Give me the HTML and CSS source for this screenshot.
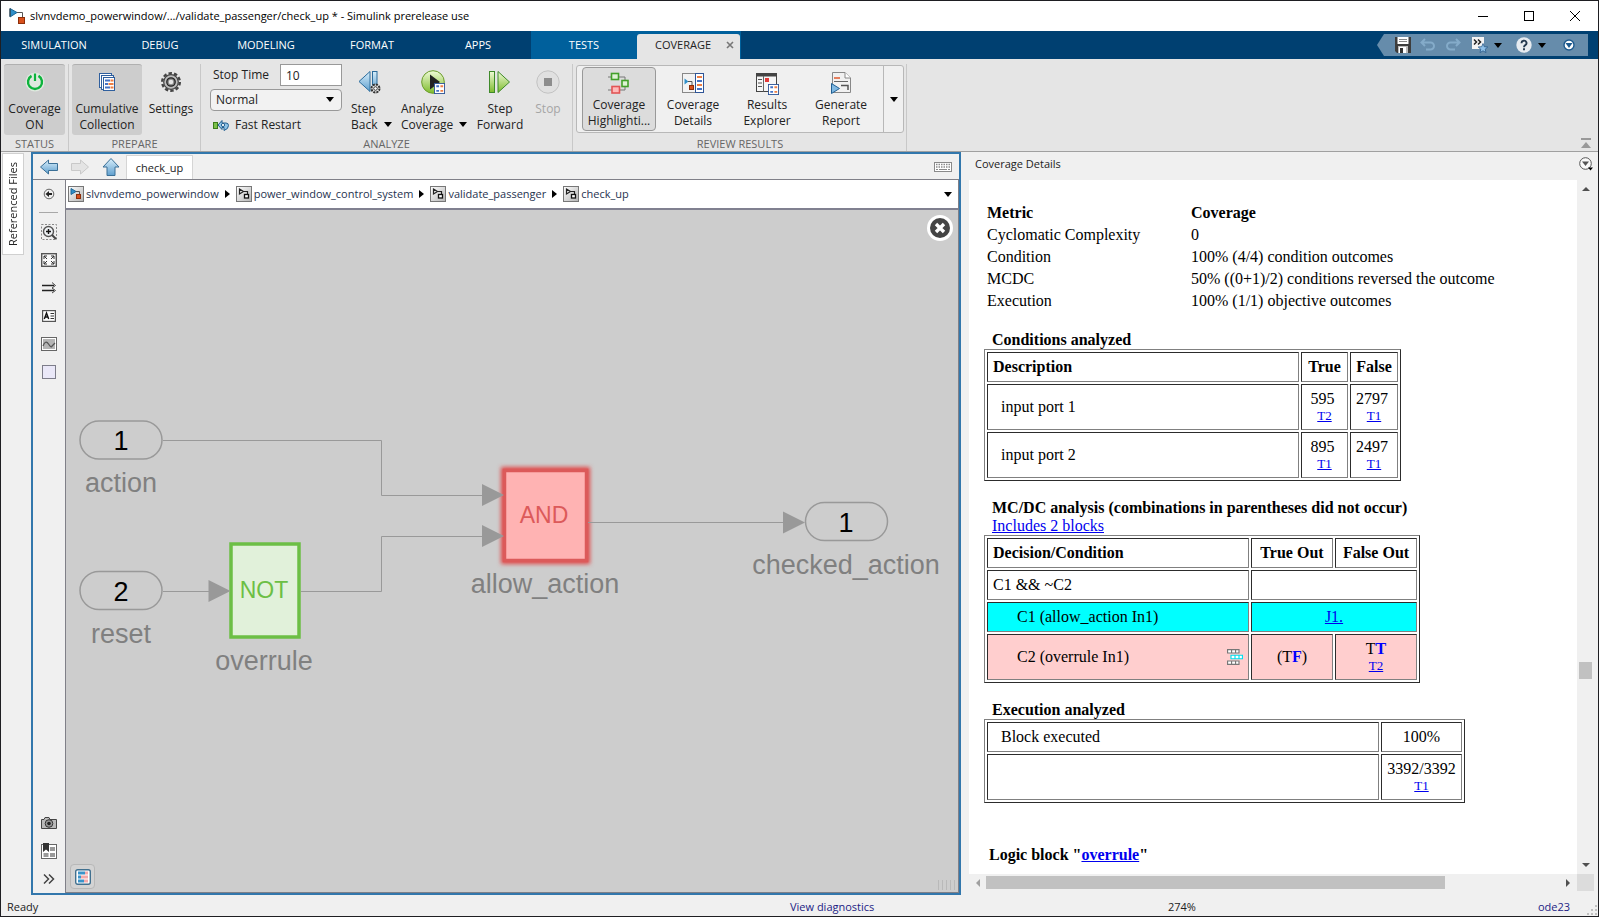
FILE: index.html
```html
<!DOCTYPE html>
<html lang="en">
<head>
<meta charset="utf-8">
<title>slvnvdemo_powerwindow - Simulink</title>
<link rel="stylesheet" href="styles.css">
</head>
<body>
<svg class="defs" width="0" height="0" aria-hidden="true">
  <defs>
    <linearGradient id="g-blue" x1="0" y1="0" x2="0" y2="1"><stop offset="0" stop-color="#d9effb"/><stop offset="1" stop-color="#5f9fce"/></linearGradient>
    <linearGradient id="g-green" x1="0" y1="0" x2="0" y2="1"><stop offset="0" stop-color="#f0fbd8"/><stop offset="1" stop-color="#7dbb2c"/></linearGradient>
    <linearGradient id="g-gray" x1="0" y1="0" x2="1" y2="1"><stop offset="0" stop-color="#ffffff"/><stop offset="1" stop-color="#b4b4b4"/></linearGradient>
    <symbol id="i-model" viewBox="0 0 16 16"><path d="M8 4.500H13.500V10" fill="none" stroke="#555"/><path d="M1 0.500L8 4.500L1 9Z" fill="#2f8fc9" stroke="#1d6796"/><path d="M1 .5v8" stroke="#333"/><rect x="9.500" y="9.500" width="6" height="6" fill="#d8501c" stroke="#8c2f0a"/></symbol>
    <symbol id="i-modelbox" viewBox="0 0 16 16"><rect x=".5" y=".5" width="15" height="15" fill="url(#g-gray)" stroke="#777"/><path d="M8 5.500H11.500V8" fill="none" stroke="#555"/><path d="M3 2.500L8 5.500L3 8.500Z" fill="#2f8fc9" stroke="#1d6796"/><rect x="8.500" y="8.500" width="4" height="4" fill="#d8501c" stroke="#8c2f0a"/></symbol>
    <symbol id="i-sub" viewBox="0 0 16 16"><rect x=".5" y=".5" width="15" height="15" fill="url(#g-gray)" stroke="#777"/><path d="M8 5.500H11.500V8M3.500 3L7.500 5.500L3.500 8Z" fill="none" stroke="#222" stroke-width="1.200"/><rect x="8.500" y="8.500" width="4" height="3.500" fill="#fff" stroke="#111" stroke-width="1.300"/></symbol>
    <symbol id="i-report" viewBox="0 0 12 12"><rect x=".5" y=".5" width="11" height="11" fill="#fff" stroke="#2f5597"/><path d="M2.500 3.500h3M2.500 8.500h3" stroke="#4472c4" stroke-width="2"/><path d="M7 3.500h3M7 8.500h3" stroke="#ee7f45" stroke-width="2"/></symbol>
    <symbol id="i-combo" viewBox="0 0 14 14"><g fill="#fff" stroke="#777"><path d="M.5 .5h10v3H.5zM4 .5v3M7.500 .5v3M.5 10.500h10v3H.5zM4 10.500v3M7.500 10.500v3"/></g><path d="M3.500 5.500h10v3h-10zM7 5.500v3M10.500 5.500v3" fill="#fff" stroke="#00e0ee"/></symbol>
  </defs>
</svg>
<div class="window">
  <header class="titlebar">
    <svg class="icon16"><use href="#i-model"/></svg>
    <h1 class="title">slvnvdemo_powerwindow/.../validate_passenger/check_up * - Simulink prerelease use</h1>
    <div class="winctl">
      <button aria-label="Minimize"><svg width="10" height="10"><path d="M0 5.500h10" stroke="#000"/></svg></button>
      <button aria-label="Maximize"><svg width="10" height="10"><rect x=".5" y=".5" width="9" height="9" fill="none" stroke="#000"/></svg></button>
      <button aria-label="Close"><svg width="10" height="10"><path d="M0 0L10 10M10 0L0 10" stroke="#000"/></svg></button>
    </div>
  </header>

  <nav class="tabs">
    <button class="tab">SIMULATION</button><button class="tab">DEBUG</button><button class="tab">MODELING</button><button class="tab">FORMAT</button><button class="tab">APPS</button>
    <div class="contextual">
      <button class="tab">TESTS</button>
      <button class="tab tab-active">COVERAGE<svg width="8" height="8"><path d="M1 1L7 7M7 1L1 7" stroke="#777" stroke-width="1.600"/></svg></button>
    </div>
    <div class="quick">
      <button aria-label="Save"><svg width="16" height="16"><path d="M0 0H16V16H2L0 14Z" fill="#3d3d3d"/><rect x="2.500" y="0" width="11" height="7" fill="#fff"/><path d="M4 2.500h8M4 4.500h8" stroke="#888"/><rect x="3" y="9" width="10" height="7" fill="#bbb"/><rect x="4" y="10" width="7" height="6" fill="#fff"/><rect x="5" y="11" width="3" height="5" fill="#333"/></svg></button>
      <button aria-label="Undo"><svg width="16" height="16"><path d="M5 2L1.500 5.500L5 9M2 5.500H10.500a3.500 3.500 0 0 1 0 7H6" fill="none" stroke="#84abc9" stroke-width="2"/></svg></button>
      <button aria-label="Redo"><svg width="16" height="16"><path d="M11 2L14.500 5.500L11 9M14 5.500H5.500a3.500 3.500 0 0 0 0 7H10" fill="none" stroke="#84abc9" stroke-width="2"/></svg></button>
      <button class="wide" aria-label="Favorites"><svg width="16" height="16"><rect x="0" y="0" width="12" height="12" fill="#f4f4f4"/><path d="M2 2.500L4.500 5L2 7.500M6 2.500L8.500 5L6 7.500" fill="none" stroke="#222" stroke-width="1.500"/><path d="M11 6.500L12.300 9.700L15.800 10L13.200 12.200L14 15.600L11 13.800L8 15.600L8.800 12.200L6.200 10L9.700 9.700Z" fill="#8fc0e8" stroke="#2c5d8c" stroke-width=".8"/></svg><i class="caret"></i></button>
      <button class="wide" aria-label="Help"><svg width="16" height="16"><circle cx="8" cy="8" r="7.700" fill="#e6ebf0"/><path d="M5.500 6.200a2.500 2.400 0 1 1 3.800 1.900Q8 8.900 8 10.200M8 11.200v2" fill="none" stroke="#23384f" stroke-width="1.900"/></svg><i class="caret"></i></button>
      <button aria-label="Options"><svg width="12" height="12"><circle cx="6" cy="6" r="5" fill="#fff" stroke="#1d5a8e" stroke-width="1.400"/><path d="M2.500 4h7L6 9z" fill="#1d5a8e"/></svg></button>
    </div>
  </nav>

  <section class="ribbon">
    <div class="group g-status">
      <div class="tools">
        <button class="tool on"><svg class="icon24" viewBox="0 0 24 24"><circle cx="12" cy="12" r="9.500" fill="#dfe9df"/><path d="M8.500 5.900a7 7 0 1 0 7 0" fill="none" stroke="#0db33c" stroke-width="2.400"/><path d="M12 3.500v7.500" stroke="#0db33c" stroke-width="2.200"/></svg><span>Coverage<br>ON</span></button>
      </div>
      <h2>STATUS</h2>
    </div>
    <div class="group g-prepare">
      <div class="tools">
        <button class="tool on"><svg class="icon24" viewBox="0 0 24 24"><g fill="#fff" stroke="#2f5f9e"><rect x="4.500" y="3.500" width="12" height="14"/><rect x="6.500" y="5.500" width="12" height="14"/><rect x="8.500" y="7.500" width="11" height="13"/></g><path d="M10 10.500h5M10 14h3M10 17.500h5" stroke="#4472c4" stroke-width="2"/><path d="M15.500 10.500h3M13.500 14h5M15.500 17.500h3" stroke="#ee7f45" stroke-width="2"/></svg><span>Cumulative<br>Collection</span></button>
        <button class="tool"><svg class="icon24" viewBox="0 0 24 24"><circle cx="12" cy="12" r="8.800" fill="none" stroke="#444" stroke-width="2.400" stroke-dasharray="3.400 2.130"/><circle cx="12" cy="12" r="7.300" fill="#bdbdbd" stroke="#444" stroke-width="1.200"/><circle cx="12" cy="12" r="4.200" fill="#888" stroke="#222" stroke-width="1.300"/><circle cx="12" cy="12" r="2.300" fill="#e5e5e5"/></svg><span>Settings</span></button>
      </div>
      <h2>PREPARE</h2>
    </div>
    <div class="group g-analyze">
      <div class="tools">
        <div class="simform">
          <div class="stoprow"><label for="stop">Stop Time</label><input id="stop" type="text" value="10"></div>
          <div class="selwrap"><select aria-label="Simulation mode"><option>Normal</option></select><i class="caret"></i></div>
          <button class="restart"><svg width="16" height="12" viewBox="0 0 16 12"><rect x=".5" y="3.500" width="4" height="6" fill="#7cc04a" stroke="#3b7d1a"/><path d="M5 6L9 1.500V4H13Q15.500 4 15.500 6.500Q15.500 10 11 11.500V8.500H9V10.500Z" fill="#8fc3e6" stroke="#25608f"/><circle cx="10" cy="6" r="1.600" fill="#fff" stroke="#25608f"/></svg>Fast Restart</button>
        </div>
        <button class="tool left t-back"><svg class="icon24" viewBox="0 0 24 24"><path d="M2 11.500L13 1.500V21.500Z" fill="url(#g-blue)" stroke="#2c6c9c"/><rect x="15.500" y="1.500" width="4.500" height="18" fill="url(#g-blue)" stroke="#2c6c9c"/><circle cx="18.500" cy="18.500" r="4" fill="#eee" stroke="#333" stroke-width="2" stroke-dasharray="2.200 .9"/><circle cx="18.500" cy="18.500" r="1.800" fill="#fff" stroke="#333"/></svg><span>Step<br>Back <i class="caret"></i></span></button>
        <button class="tool left t-analyze"><svg class="icon24" viewBox="0 0 24 24"><circle cx="12" cy="12" r="11.300" fill="url(#g-green)" stroke="#6b9c2c"/><path d="M9 4.500L19 12L9 19.500Z" fill="#222"/><use href="#i-report" x="13" y="13" width="11" height="11"/></svg><span>Analyze<br>Coverage <i class="caret"></i></span></button>
        <button class="tool t-fwd"><svg class="icon24" viewBox="0 0 24 24"><rect x="1.500" y="1.500" width="5" height="21" fill="url(#g-green)" stroke="#3f8a2a"/><path d="M10 1.500L21.500 12L10 22.500Z" fill="url(#g-green)" stroke="#3f8a2a"/></svg><span>Step<br>Forward</span></button>
        <button class="tool off"><svg class="icon24" viewBox="0 0 24 24"><circle cx="12" cy="12" r="11.200" fill="#e0e0e0" stroke="#c2c2c2"/><rect x="8" y="8" width="8" height="8" fill="#8d8d8d"/></svg><span>Stop</span></button>
      </div>
      <h2>ANALYZE</h2>
    </div>
    <div class="group g-review">
      <div class="gallery">
        <button class="card sel"><svg class="icon24" viewBox="0 0 24 24"><path d="M1 6h4M12 6h6v3M18 16v3h-6M1 19h4" fill="none" stroke="#777"/><g stroke-width="1.600"><rect x="4.500" y="2.500" width="7" height="6" fill="#dff3d5" stroke="#43a02a"/><rect x="15" y="9.500" width="6" height="6" fill="#dff3d5" stroke="#43a02a"/><rect x="5" y="15.500" width="7.500" height="6.500" fill="#ffb9b9" stroke="#e25555"/></g></svg><span>Coverage<br>Highlighti...</span></button>
        <button class="card"><svg class="icon24" viewBox="0 0 24 24"><rect x="1.500" y="2.500" width="13" height="19" fill="#f3f3f3" stroke="#888"/><path d="M3.500 7.500v6l4-3z" fill="#2f8fc9"/><path d="M7 10.500h4v4" fill="none" stroke="#555"/><rect x="8.500" y="14.500" width="4" height="4" fill="#d8501c" stroke="#8c2f0a"/><rect x="14.500" y="2.500" width="8" height="19" fill="#fff" stroke="#2f5597"/><path d="M16 6h5M16 14h5" stroke="#ee7f45" stroke-width="2"/><path d="M16 10h5M16 18h5" stroke="#4472c4" stroke-width="2"/></svg><span>Coverage<br>Details</span></button>
        <button class="card"><svg class="icon24" viewBox="0 0 24 24"><rect x="1.500" y="2.500" width="20" height="18" fill="#f6f6f6" stroke="#444"/><rect x="1" y="2" width="21" height="3.500" fill="#444"/><path d="M8.500 5v15.500" stroke="#666"/><path d="M3 8.500h4M3 12h4M3 15.500h4" stroke="#555"/><rect x="10" y="7" width="4" height="4" fill="#e33b3b"/><use href="#i-report" x="13" y="13" width="11" height="11"/></svg><span>Results<br>Explorer</span></button>
        <button class="card"><svg class="icon24" viewBox="0 0 24 24"><path d="M3.500 1.500H16L21.500 7V21.500H3.500Z" fill="#f1f1f1" stroke="#888"/><path d="M16 1.500V7H21.500" fill="#fff" stroke="#888"/><path d="M5 7h6" stroke="#e2592c" stroke-width="1.500"/><path d="M5 10.500h14" stroke="#666"/><path d="M12 14.500H19V19" fill="none" stroke="#555" stroke-width="1.500"/><path d="M2.500 12.500L10.500 17.500L2.500 22.500Z" fill="#7fb8e2" stroke="#1f5f93"/></svg><span>Generate<br>Report</span></button>
        <button class="more" aria-label="More"><i class="caret"></i></button>
      </div>
      <h2>REVIEW RESULTS</h2>
    </div>
    <button class="collapse" aria-label="Collapse"><svg width="10" height="10"><path d="M0 1h10" stroke="#999" stroke-width="2"/><path d="M0 10L5 4L10 10Z" fill="#999"/></svg></button>
  </section>

  <main class="body">
    <aside class="side"><button class="vtab">Referenced Files</button></aside>

    <section class="model">
      <div class="docbar">
        <button aria-label="Back"><svg width="20" height="18"><path d="M1.500 9L9.500 2V5.500H18.500V12.500H9.500V16Z" fill="url(#g-blue)" stroke="#3a6f96"/></svg></button>
        <button aria-label="Forward"><svg width="20" height="18"><path d="M18.500 9L10.500 2V5.500H1.500V12.500H10.500V16Z" fill="#e4e4e4" stroke="#c9c9c9"/></svg></button>
        <button aria-label="Up"><svg width="18" height="20"><path d="M9 1.500L17 10H13V18.500H5V10H1Z" fill="url(#g-blue)" stroke="#3a6f96"/></svg></button>
        <button class="doctab">check_up</button>
        <button class="kbd" aria-label="Keyboard"><svg width="18" height="10"><rect x=".5" y=".5" width="17" height="9" fill="#fff" stroke="#8a8a8a"/><path d="M2 2.500h14M2 5h14" stroke="#8a8a8a" stroke-width="1.500" stroke-dasharray="1.500 1"/><path d="M2 7.500h2M5 7.500h8M14 7.500h2" stroke="#8a8a8a"/></svg></button>
      </div>
      <div class="editor">
        <div class="palette">
          <button aria-label="Hide browser"><svg width="12" height="12"><circle cx="6" cy="6" r="4.800" fill="#eee" stroke="#666"/><path d="M2.500 6L6 3V5H9V7H6V9Z" fill="#222"/></svg></button>
          <hr>
          <button aria-label="Zoom"><svg width="16" height="16"><rect x=".5" y=".5" width="15" height="15" fill="none" stroke="#888" stroke-dasharray="2 1.500"/><circle cx="7.500" cy="7.500" r="5" fill="#eef1f4" stroke="#555" stroke-width="1.400"/><path d="M11 11L15 15" stroke="#444" stroke-width="2"/><path d="M5 7.500h5M7.500 5v5" stroke="#111" stroke-width="1.400"/></svg></button>
          <button aria-label="Fit to view"><svg width="16" height="14"><rect x=".7" y=".7" width="14.600" height="12.600" fill="#fafafa" stroke="#555" stroke-width="1.400"/><path d="M3 6V3H6M3 3L6 6M10 3H13V6M13 3L10 6M3 8V11H6M3 11L6 8M13 8V11H10M13 11L10 8" fill="none" stroke="#333"/></svg></button>
          <button aria-label="Sample time"><svg width="14" height="12"><path d="M0 3.500h12M0 8.500h12" stroke="#222" stroke-width="1.300"/><path d="M10 .5L13.500 3.500L10 6M10 6L13.500 8.500L10 11" fill="none" stroke="#444"/></svg></button>
          <button aria-label="Annotation"><svg width="14" height="12"><rect x=".6" y=".6" width="12.800" height="10.800" fill="#fff" stroke="#555" stroke-width="1.200"/><path d="M2.300 9L4.500 3L6.700 9M3 7h3" fill="none" stroke="#111" stroke-width="1.400"/><path d="M8.500 3.500H12M8.500 6H12M8.500 8.500H12" stroke="#333"/></svg></button>
          <button aria-label="Image"><svg width="16" height="14"><rect x=".5" y=".5" width="15" height="13" fill="#fff" stroke="#666"/><rect x="2" y="2" width="12" height="10" fill="#b5b5b5"/><path d="M2 9Q4.500 2.500 7.500 7T11 9L14 6" fill="none" stroke="#555" stroke-width="1.300"/></svg></button>
          <button aria-label="Area"><svg width="14" height="14"><rect x=".5" y=".5" width="13" height="13" fill="#eae8f8" stroke="#7d7d8a"/></svg></button>
          <span class="grow"></span>
          <button aria-label="Screenshot"><svg width="16" height="12"><path d="M.5 2.500H3L4 .5H8L9 2.500H15.500V11.500H.5Z" fill="#b9b9b9" stroke="#444"/><circle cx="8" cy="6.500" r="3.800" fill="#999" stroke="#333"/><circle cx="8" cy="6.500" r="1.800" fill="#222"/></svg></button>
          <button aria-label="Library"><svg width="16" height="16"><rect x=".5" y="1.500" width="15" height="14" fill="#fff" stroke="#666"/><path d="M9 4h5v4H9zM2.500 10h5v4h-5zM9 10h5v4H9z" fill="#999"/><path d="M2 0H8V9L5 6.500L2 9Z" fill="#333"/></svg></button>
          <button aria-label="More tools"><svg width="12" height="10"><path d="M1 .5L5.500 5L1 9.500M6 .5L10.500 5L6 9.500" fill="none" stroke="#444" stroke-width="1.500"/></svg></button>
        </div>
        <div class="stage">
          <div class="crumbs">
            <button class="crumb"><svg class="icon16"><use href="#i-modelbox"/></svg>slvnvdemo_powerwindow</button><i class="arrow"></i>
            <button class="crumb"><svg class="icon16"><use href="#i-sub"/></svg>power_window_control_system</button><i class="arrow"></i>
            <button class="crumb"><svg class="icon16"><use href="#i-sub"/></svg>validate_passenger</button><i class="arrow"></i>
            <button class="crumb"><svg class="icon16"><use href="#i-sub"/></svg>check_up</button>
            <button class="history" aria-label="History"><i class="caret"></i></button>
          </div>
          <div class="canvas">
            <svg class="diagram" width="892" height="682" viewBox="66 210 892 682" role="img" aria-label="check_up block diagram">
              <defs><filter id="glow" x="-20%" y="-20%" width="140%" height="140%"><feGaussianBlur stdDeviation="2"/></filter></defs>
              <g fill="none" stroke="#999" stroke-width="1.500">
                <rect x="80" y="421" width="82" height="38" rx="19"/><rect x="80" y="571.500" width="82" height="38" rx="19"/><rect x="805.500" y="502.500" width="82" height="38" rx="19"/>
              </g>
              <rect x="503" y="469" width="85" height="93" fill="#e04848" stroke="#e04848" stroke-width="4" filter="url(#glow)"/>
              <rect x="504.500" y="470.500" width="82" height="90" fill="#ffb3b3" stroke="#dc5a5a" stroke-width="3.500"/>
              <rect x="231" y="544" width="68" height="93" fill="#e1f1da" stroke="#6cbf45" stroke-width="3.500"/>
              <path d="M163 440.500H381.500V495.500H484M301 591.500H381.500V536.500H484M163 591.500H210M588 522.500H784" fill="none" stroke="#999"/>
              <path d="M482 484L504 495L482 506ZM482 525L504 536L482 547ZM208.500 580L230.500 591L208.500 602ZM783 511.500L805 522.500L783 533.500Z" fill="#999"/>
              <g class="num"><text x="121" y="450">1</text><text x="121" y="601">2</text><text x="846" y="532">1</text></g>
              <g class="name"><text x="121" y="492">action</text><text x="121" y="643">reset</text><text x="264" y="670">overrule</text><text x="545" y="593">allow_action</text><text x="846" y="574">checked_action</text></g>
              <g class="op"><text x="264" y="598" fill="#6cbf45">NOT</text><text x="544" y="523" fill="#dc5a5a">AND</text></g>
            </svg>
            <button class="closer" aria-label="Close highlighting"><svg width="26" height="26"><circle cx="13" cy="13" r="13" fill="#fff"/><circle cx="13" cy="13" r="10" fill="#444"/><path d="M9 9L17 17M17 9L9 17" stroke="#fff" stroke-width="3.400"/></svg></button>
            <button class="badge" aria-label="Coverage report"><svg width="16" height="16"><rect x=".7" y=".7" width="14.600" height="14.600" rx="2" fill="#fff" stroke="#41708f" stroke-width="1.400"/><path d="M3 4h7M3 8h3M3 12h6" stroke="#3a93c9" stroke-width="3"/><path d="M10 4h3M6 8h7M9 12h4" stroke="#f4a9a9" stroke-width="3"/></svg></button>
            <svg class="grip" width="20" height="10"><path d="M.5 0v10M4.500 0v10M8.500 0v10M12.500 0v10M16.500 0v10" stroke="#b9b9b9"/></svg>
          </div>
        </div>
      </div>
    </section>

    <aside class="details">
      <div class="dhead"><h2>Coverage Details</h2><button aria-label="Panel menu"><svg width="15" height="14"><circle cx="6.500" cy="6.500" r="5.800" fill="#fafafa" stroke="#555"/><path d="M3 4.500h7L6.500 9z" fill="#555"/><path d="M9 10.500h5L11.500 13.500z" fill="#000"/></svg></button></div>
      <div class="scroller">
        <article class="report">
          <table class="metrics">
            <tr><th>Metric</th><th>Coverage</th></tr>
            <tr><td>Cyclomatic Complexity</td><td>0</td></tr>
            <tr><td>Condition</td><td>100% (4/4) condition outcomes</td></tr>
            <tr><td>MCDC</td><td>50% ((0+1)/2) conditions reversed the outcome</td></tr>
            <tr><td>Execution</td><td>100% (1/1) objective outcomes</td></tr>
          </table>
          <h3>Conditions analyzed</h3>
          <table class="grid">
            <colgroup><col class="c-desc"><col class="c-true"><col class="c-false"></colgroup>
            <tr><th class="l">Description</th><th>True</th><th>False</th></tr>
            <tr><td class="in">input port 1</td><td class="n">595&nbsp;<a href="#">T2</a></td><td class="n">2797&nbsp;<a href="#">T1</a></td></tr>
            <tr><td class="in">input port 2</td><td class="n">895&nbsp;<a href="#">T1</a></td><td class="n">2497&nbsp;<a href="#">T1</a></td></tr>
          </table>
          <h3>MC/DC analysis (combinations in parentheses did not occur)</h3>
          <p class="incl"><a href="#">Includes 2 blocks</a></p>
          <table class="grid">
            <colgroup><col class="c-dec"><col class="c-out"><col class="c-out"></colgroup>
            <tr><th class="l">Decision/Condition</th><th>True Out</th><th>False Out</th></tr>
            <tr><td>C1 &amp;&amp; ~C2</td><td colspan="2">&nbsp;</td></tr>
            <tr class="cyan"><td class="in2">C1 (allow_action In1)</td><td colspan="2" class="c"><a href="#">J1.</a></td></tr>
            <tr class="pink"><td class="in2"><div class="split">C2 (overrule In1)<svg width="16" height="16" viewBox="0 0 14 14"><use href="#i-combo" width="14" height="14"/></svg></div></td><td class="c">(T<b>F</b>)</td><td class="n">T<b>T</b><a href="#">T2</a></td></tr>
          </table>
          <h3>Execution analyzed</h3>
          <table class="grid">
            <colgroup><col class="c-exec"><col class="c-pct"></colgroup>
            <tr><td class="in">Block executed</td><td class="c">100%</td></tr>
            <tr><td></td><td class="n">3392/3392<a href="#">T1</a></td></tr>
          </table>
          <h3 class="block">Logic block "<a href="#">overrule</a>"</h3>
        </article>
        <div class="vbar"><svg width="8" height="4"><path d="M0 4L4 0L8 4z" fill="#505050"/></svg><span class="vspace-a"></span><span class="vthumb"></span><span class="vspace-b"></span><svg width="8" height="4"><path d="M0 0L4 4L8 0z" fill="#505050"/></svg></div>
        <div class="hbar"><svg width="4" height="8"><path d="M4 0L0 4L4 8z" fill="#a0a0a0"/></svg><div class="htrack"><span class="hthumb"></span></div><svg width="4" height="8"><path d="M0 0L4 4L0 8z" fill="#505050"/></svg></div>
        <div class="corner"></div>
      </div>
    </aside>
  </main>

  <footer class="status">
    <span>Ready</span><a href="#">View diagnostics</a><span>274%</span><a href="#">ode23</a>
    <svg class="sizer" width="12" height="12"><path d="M9 1h2v2H9zM5 5h2v2H5zM9 5h2v2H9zM1 9h2v2H1zM5 9h2v2H5zM9 9h2v2H9z" fill="#c0c0c0"/></svg>
  </footer>
</div>
</body>
</html>
```
FILE: styles.css
```css
* { box-sizing: border-box; }

body {
  margin: 0;
  font: 12px/16px "Open Sans", "Noto Sans", sans-serif;
  color: #222;
}

button, input, select { font: inherit; color: inherit; }
button { border: 0; background: none; padding: 0; display: flex; align-items: center; justify-content: center; }
svg { display: block; flex: none; }
h1, h2, h3, p { margin: 0; font-size: inherit; font-weight: normal; }
.defs { position: absolute; }
.icon16 { width: 16px; height: 16px; }
.icon24 { width: 24px; height: 24px; }
.caret { display: inline-block; flex: none; border: 4px solid transparent; border-top: 5px solid #000; border-bottom: 0; }

.window {
  height: 100vh;
  display: flex;
  flex-direction: column;
  border: 1px solid #1e1e22;
  background: #f0f0f0;
  font-size: 11px;
}

/* title bar */
.titlebar { height: 30px; flex: none; display: flex; align-items: center; gap: 5px; padding-left: 8px; background: #fff; }
.title { flex: 1; color: #000; white-space: nowrap; }
.winctl { display: flex; }
.winctl button { width: 46px; height: 30px; }

/* toolstrip tabs */
.tabs { height: 28px; flex: none; display: flex; background: #004071; }
.tab { width: 106px; color: #fff; }
.contextual { display: flex; padding-right: 1px; background: #00609c; }
.tab-active { width: 103px; margin-top: 3px; gap: 15px; padding: 0 0 3px 12px; color: #222; background: #e5e5e5; border-radius: 3px 3px 0 0; }
.quick {
  margin: 3px 10px 3px auto;
  padding: 0 3px 0 13px;
  display: flex;
  background: #668cab;
  clip-path: polygon(7px 0, 100% 0, 100% 100%, 7px 100%, 0 50%);
}
.quick button { width: 25px; }
.quick .wide { width: 44px; gap: 6px; }
.quick button:last-child { width: 32px; }

/* ribbon */
.ribbon { height: 93px; flex: none; display: flex; background: #e5e5e5; border-bottom: 1px solid #a0a0a0; }
.group { display: flex; flex-direction: column; justify-content: space-between; margin-top: 5px; border-right: 1px solid #c8c8c8; }
.group h2 { text-align: center; color: #666; line-height: 14px; }
.tools { display: flex; height: 71px; padding-left: 3px; }
.g-status { width: 68px; }
.g-status .tool { width: 61px; }
.g-prepare { width: 132px; }
.g-prepare .on { width: 70px; }
.g-prepare .tool + .tool { width: 58px; }
.g-analyze { width: 372px; }
.g-analyze .tools { padding-left: 9px; }
.tool { flex: none; flex-direction: column; justify-content: flex-start; gap: 7px; padding-top: 6px; }
.tool.on { background: #cdcdcd; border-top: 1px solid #b0b0b0; border-radius: 3px; padding-top: 5px; }
.tool.left span { align-self: stretch; text-align: left; white-space: nowrap; }
.tool.off { width: 32px; color: #a5a5a5; }
.tool .caret { margin-left: 3px; vertical-align: 2px; }
.t-back { width: 51px; padding-left: 9px; }
.t-analyze { width: 75px; padding-left: 8px; }
.t-back .icon24, .t-analyze .icon24 { align-self: flex-start; }
.t-back .icon24 { margin-left: 6px; }
.t-analyze .icon24 { margin-left: 20px; }
.t-fwd { width: 64px; }
.simform { width: 132px; flex: none; display: flex; flex-direction: column; gap: 3px; }
.stoprow { display: flex; align-items: center; justify-content: space-between; padding-left: 3px; }
.stoprow input { width: 62px; height: 22px; border: 1px solid #999; padding: 0 5px; background: #fff; }
.selwrap { position: relative; }
.selwrap select { appearance: none; display: block; width: 100%; height: 22px; border: 1px solid #999; border-radius: 4px; padding: 0 5px; background: #f2f2f2; }
.selwrap .caret { position: absolute; right: 8px; top: 8px; pointer-events: none; }
.restart { justify-content: flex-start; gap: 6px; height: 22px; padding-left: 3px; }

.g-review { width: 334px; padding: 1px 2px 0 3px; }
.gallery { display: flex; height: 68px; border: 1px solid #b8b8b8; border-radius: 3px; background: #f0f0f0; padding-left: 5px; }
.card { width: 74px; flex-direction: column; justify-content: flex-start; gap: 2px; padding-top: 3px; margin: 1px 0; border: 1px solid transparent; }
.card.sel { background: #dcdcdc; border: 1px solid #999; border-radius: 4px; }
.more { flex: 1; margin-left: 5px; border-left: 1px solid #b8b8b8; }
.collapse { margin: auto 7px 3px auto; }
.tool, .card, .stoprow, .selwrap, .restart { font-size: 12px; }

/* body */
.body { flex: 1; min-height: 0; display: grid; grid-template-columns: 30px minmax(0, 930fr) minmax(0, 637fr); }
.side { padding: 1px 0 0 1px; }
.vtab { width: 22px; height: 102px; border: 1px solid #d0d0d0; background: #fff; writing-mode: vertical-rl; transform: rotate(180deg); white-space: nowrap; }
.model { display: flex; flex-direction: column; min-width: 0; margin-bottom: 3px; border: 2px solid #3277ac; }
.docbar { height: 26px; flex: none; display: flex; align-items: stretch; border-bottom: 1px solid #808088; }
.docbar button { width: 31px; }
.docbar .doctab { width: 67px; margin-top: 1px; background: #fff; border: 1px solid #d5d5d5; border-bottom: 0; }
.docbar .kbd { margin-left: auto; width: 32px; }
.editor { flex: 1; min-height: 0; display: flex; }
.palette { width: 33px; flex: none; display: flex; flex-direction: column; border-right: 1px solid #808088; }
.palette button { height: 28px; flex: none; }
.palette hr { width: 19px; margin: 4px 6px 5px; border: 0; border-top: 1px solid #a8a8a8; }
.grow { flex: 1; }
.stage { flex: 1; min-width: 0; display: flex; flex-direction: column; border-right: 1px solid #808088; border-bottom: 1px solid #808088; }
.crumbs { height: 30px; flex: none; display: flex; align-items: center; gap: 6px; padding-left: 2px; background: #fff; border-bottom: 2px solid #808090; color: #1f3350; }
.crumb { gap: 2px; white-space: nowrap; }
.arrow { border: 4px solid transparent; border-left: 5px solid #000; border-right: 0; }
.history { margin-left: auto; width: 20px; height: 24px; }
.canvas { flex: 1; min-height: 0; position: relative; overflow: hidden; background: #cdcdcd; }
.diagram { font-family: "Liberation Sans", Arial, sans-serif; text-anchor: middle; }
.num { font-size: 27px; fill: #000; }
.name { font-size: 27px; fill: #808080; }
.op { font-size: 23px; }
.closer { position: absolute; top: 5px; right: 5px; }
.badge { position: absolute; left: 4px; bottom: 3px; width: 25px; height: 25px; border: 1px solid #b8b8b8; border-radius: 4px; background: #d3d3d3; }
.grip { position: absolute; right: 0; bottom: 2px; }

/* coverage details */
.details { display: flex; flex-direction: column; min-width: 0; padding: 0 4px 7px 8px; }
.dhead { height: 28px; flex: none; display: flex; align-items: center; justify-content: space-between; padding: 0 0 4px 6px; }
.scroller { flex: 1; min-height: 0; display: grid; grid-template: minmax(0, 1fr) 17px / minmax(0, 1fr) 17px; }
.report { overflow: hidden; background: #fff; padding: 21px 0 0 15px; color: #000; font: 16px/18px "Liberation Serif", "Times New Roman", serif; }
.report a { color: #00e; }
.metrics { border-spacing: 2px; margin-bottom: 17px; }
.metrics th, .metrics td { padding: 1px; text-align: left; }
.metrics td:first-child { width: 202px; }
.report h3 { font-weight: bold; margin-left: 8px; line-height: 19px; }
.incl { margin-left: 8px; }
.grid { table-layout: fixed; border: 1px outset #808080; border-spacing: 2px; margin-bottom: 17px; width: 0; }
.grid th, .grid td { border: 1px inset #808080; padding: 5px; }
.grid .l { text-align: left; }
.grid .c { text-align: center; }
.grid .n { text-align: center; white-space: nowrap; }
.grid .n a { display: block; font-size: 13px; line-height: 16px; }
.grid .in { padding-left: 13px; }
.grid .in2 { padding-left: 29px; }
.split { display: flex; align-items: center; justify-content: space-between; }
.c-desc { width: 312px; } .c-true { width: 47px; } .c-false { width: 48px; }
.c-dec { width: 262px; } .c-out { width: 82px; }
.c-exec { width: 392px; } .c-pct { width: 81px; }
.cyan td { background: #0ff; }
.pink td { background: #ffcece; }
.report b { color: #00f; }
.report .block { margin: 42px 0 0 5px; }
.vbar { display: flex; flex-direction: column; align-items: center; padding: 7px 0; }
.vspace-a { flex: 470; }
.vthumb { width: 13px; height: 17px; background: #c1c1c1; }
.vspace-b { flex: 183; }
.hbar { display: flex; align-items: center; padding: 0 7px; gap: 6px; }
.htrack { flex: 1; }
.hthumb { display: block; width: 80%; height: 13px; background: #c1c1c1; }
.corner { background: #dcdcdc; }

/* status bar */
.status { height: 18px; flex: none; display: grid; grid-template-columns: 783fr 378fr 370fr 40px 20px; align-items: center; padding-left: 6px; }
.status a { color: #1c1c84; text-decoration: none; }
.sizer { justify-self: end; align-self: end; }
```
